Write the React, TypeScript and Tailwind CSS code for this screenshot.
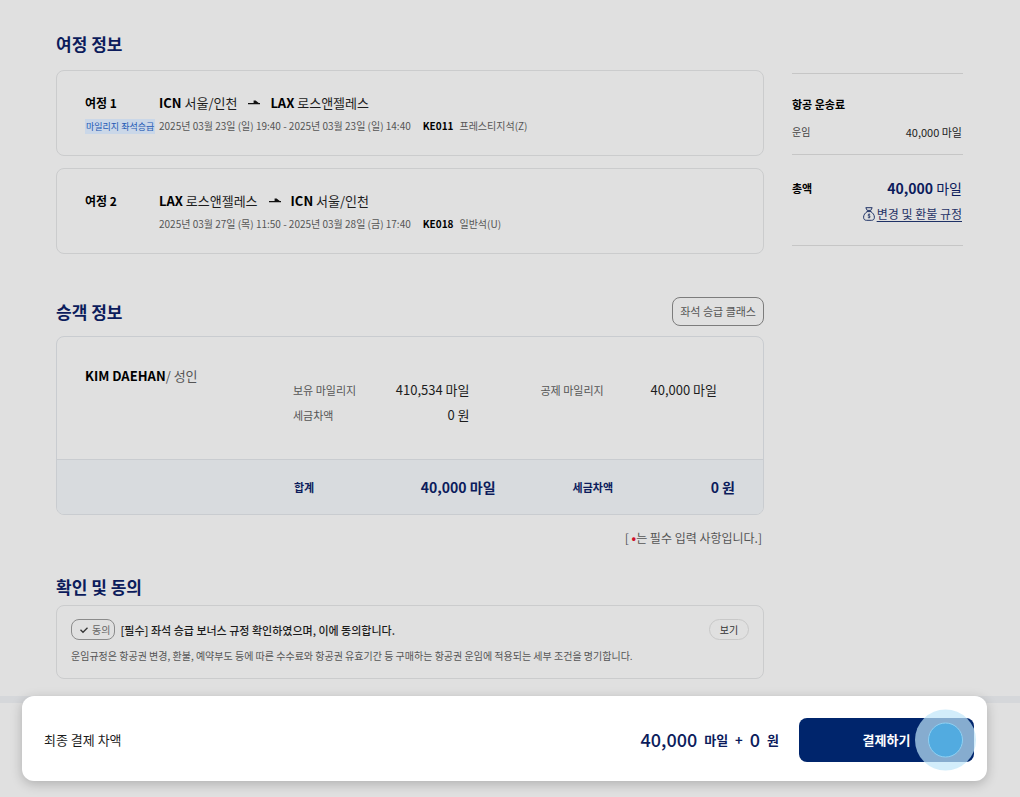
import { useState } from 'react'
import type { ReactNode } from 'react'

type Journey = {
  id: number
  badge?: string
  from: { code: string; city: string }
  to: { code: string; city: string }
  schedule: string
  flight: string
  cabin: string
}

const journeys: Journey[] = [
  {
    id: 1,
    badge: '마일리지 좌석승급',
    from: { code: 'ICN', city: '서울/인천' },
    to: { code: 'LAX', city: '로스앤젤레스' },
    schedule: '2025년 03월 23일 (일) 19:40 - 2025년 03월 23일 (일) 14:40',
    flight: 'KE011',
    cabin: '프레스티지석(Z)',
  },
  {
    id: 2,
    from: { code: 'LAX', city: '로스앤젤레스' },
    to: { code: 'ICN', city: '서울/인천' },
    schedule: '2025년 03월 27일 (목) 11:50 - 2025년 03월 28일 (금) 17:40',
    flight: 'KE018',
    cabin: '일반석(U)',
  },
]

export default function App() {
  return (
    <div className="min-h-screen bg-[#e0e0e0] text-[#1c1c1c] font-['Noto_Sans_CJK_KR',sans-serif]">
      <div className="flex items-start gap-7 pt-8 pl-14 pr-[57px]">
        <main className="flex-1 min-w-0">
          <section>
            <SectionTitle>여정 정보</SectionTitle>
            <div className="mt-3.5 flex flex-col gap-3">
              {journeys.map(j => (
                <JourneyCard key={j.id} journey={j} />
              ))}
            </div>
          </section>

          <section className="mt-[43px]">
            <div className="flex items-center justify-between">
              <SectionTitle>승객 정보</SectionTitle>
              <button type="button" className="h-[29px] px-[7px] rounded-lg border border-[#7c7c7c] text-[11px] text-[#555]">
                좌석 승급 클래스
              </button>
            </div>
            <PassengerCard />
            <p className="mt-[13px] pr-0.5 text-right text-[12px] leading-5 text-[#555]">
              [ <span className="font-bold text-[#d0112b]">•</span>는 필수 입력 사항입니다.]
            </p>
          </section>

          <section className="mt-[27px]">
            <SectionTitle>확인 및 동의</SectionTitle>
            <Agreement />
          </section>
        </main>

        <FareSummary />
      </div>

      <PaymentBar />
    </div>
  )
}

function SectionTitle({ children }: { children: ReactNode }) {
  return <h2 className="text-[17px] leading-6 font-bold text-[#0c1c5c]">{children}</h2>
}

function JourneyCard({ journey }: { journey: Journey }) {
  return (
    <article className="flex min-h-[86px] rounded-lg border border-[#cbcccd] px-7 pt-[22px] pb-4">
      <div className="w-[74px] shrink-0">
        <h3 className="text-[12px] leading-5 font-bold text-black">여정 {journey.id}</h3>
        {journey.badge && (
          <span className="mt-1.5 inline-block whitespace-nowrap bg-[#cad7e8] px-px text-[9px] leading-[15px] text-[#2359b5] align-top">
            {journey.badge}
          </span>
        )}
      </div>
      <div>
        <p className="flex items-center text-[13px] leading-5">
          <Place {...journey.from} />
          <RouteArrow />
          <Place {...journey.to} />
        </p>
        <p className="mt-[3px] text-[10px] leading-5 text-[#555]">
          {journey.schedule}
          <strong className="ml-3 mr-1.5 font-bold text-black">{journey.flight}</strong>
          {journey.cabin}
        </p>
      </div>
    </article>
  )
}

function Place({ code, city }: { code: string; city: string }) {
  return (
    <span>
      <strong className="font-bold text-black">{code}</strong> {city}
    </span>
  )
}

function RouteArrow() {
  return (
    <svg className="ml-[11px] mr-2.5 h-3 w-3" viewBox="0 0 12 12" aria-hidden="true">
      <path d="M0 6h12v1.3H0zM5.6 3.5h2L12 7H5.6z" fill="#111" />
    </svg>
  )
}

function PassengerCard() {
  return (
    <div className="mt-2.5 overflow-hidden rounded-lg border border-[#c9ccd0]">
      <div className="flex h-[122px] pl-7 pr-[46px]">
        <p className="w-[208px] shrink-0 pt-[29px] text-[13px] leading-5 text-[#555]">
          <strong className="font-bold text-black">KIM DAEHAN</strong>/ 성인
        </p>
        <dl className="grid flex-1 grid-cols-2 content-start gap-x-[71px] gap-y-[5px] pt-[43px]">
          <Amount label="보유 마일리지" value="410,534 마일" />
          <Amount label="공제 마일리지" value="40,000 마일" />
          <Amount label="세금차액" value="0 원" />
        </dl>
      </div>
      <dl className="grid grid-cols-[201fr_162fr] gap-x-[77px] border-t border-[#c9ccd0] bg-[#d8dbde] pt-[17px] pb-[17px] pl-[237px] pr-7 text-[#0c1c5c]">
        <Total label="합계" value="40,000 마일" />
        <Total label="세금차액" value="0 원" />
      </dl>
    </div>
  )
}

function Amount({ label, value }: { label: string; value: string }) {
  return (
    <div className="flex items-center justify-between leading-5">
      <dt className="text-[11px] text-[#555]">{label}</dt>
      <dd className="text-[13px] text-[#1c1c1c]">{value}</dd>
    </div>
  )
}

function Total({ label, value }: { label: string; value: string }) {
  return (
    <div className="flex items-center justify-between leading-5">
      <dt className="text-[11px] font-bold">{label}</dt>
      <dd className="text-[14px] font-bold">{value}</dd>
    </div>
  )
}

function Agreement() {
  const [agreed, setAgreed] = useState(true)

  return (
    <div className="mt-1.5 rounded-lg border border-[#cbcccd] px-3.5 pt-[13px] pb-3">
      <div className="flex items-center">
        <label className="flex h-[21px] items-center gap-1 rounded-lg border border-[#8b8b8b] pl-2 pr-1 text-[10px] text-[#666]">
          <input
            type="checkbox"
            className="sr-only"
            checked={agreed}
            onChange={e => setAgreed(e.target.checked)}
          />
          <svg className="h-2 w-2" viewBox="0 0 8 8" fill="none" stroke="#333" strokeWidth="1.3" aria-hidden="true">
            <path d="M.5 3.8 3 6.3 7.5 1.8" />
          </svg>
          동의
        </label>
        <p className="ml-[5px] flex-1 text-[11px] font-medium leading-5 text-[#1c1c1c]">
          [필수] 좌석 승급 보너스 규정 확인하였으며, 이에 동의합니다.
        </p>
        <button type="button" className="h-[21px] w-10 rounded-full border border-[#c8c8c8] text-[10px] text-[#333]">
          보기
        </button>
      </div>
      <p className="mt-1.5 text-[10px] leading-5 text-[#555]">
        운임규정은 항공권 변경, 환불, 예약부도 등에 따른 수수료와 항공권 유효기간 등 구매하는 항공권 운임에 적용되는 세부 조건을 명기합니다.
      </p>
    </div>
  )
}

function FareSummary() {
  return (
    <aside className="mt-[41px] w-[171px] shrink-0 border-y border-[#c6c6c6]">
      <div className="border-b border-[#c6c6c6] pt-5 pb-3">
        <h3 className="text-[11px] leading-5 font-bold text-black">항공 운송료</h3>
        <p className="mt-2 flex items-center justify-between pr-px leading-5">
          <span className="text-[10px] text-[#444]">운임</span>
          <span className="text-[11px] text-[#222]">40,000 마일</span>
        </p>
      </div>
      <div className="pt-[23px] pb-[21px] pr-px">
        <p className="flex items-center justify-between leading-5">
          <span className="text-[11px] font-bold text-black">총액</span>
          <span className="text-[14px] text-[#0c1c5c]">
            <strong className="font-bold">40,000</strong> 마일
          </span>
        </p>
        <a href="#rules" className="mt-1.5 flex items-center justify-end gap-0.5 text-[12px] leading-5 text-[#1f3266]">
          <MoneyBag />
          <span className="underline underline-offset-2">변경 및 환불 규정</span>
        </a>
      </div>
    </aside>
  )
}

function MoneyBag() {
  return (
    <svg className="h-[14px] w-3" viewBox="0 0 12 14" fill="none" stroke="#1f3266" aria-hidden="true">
      <path d="M2.8.7h6.4L7.8 3.4H4.2zM3.8 4.6h4.4" />
      <path d="M4.2 4.6C2 6 .6 8 .6 10.2c0 2 1 3.1 2.8 3.1h5.2c1.8 0 2.8-1.1 2.8-3.1C11.4 8 10 6 7.8 4.6" />
      <path d="M7.2 7.7C6.5 7 5 7.2 5 8.1c0 1.1 2.2.7 2.2 1.8 0 .9-1.6 1.1-2.4.4M6.1 6.6v4.6" strokeWidth=".8" />
    </svg>
  )
}

function PaymentBar() {
  return (
    <footer className="mt-[17px] border-t-[7px] border-[#d5d7da] pb-4">
      <div className="relative -mt-[7px] ml-[22px] mr-[33px] flex h-[85px] items-center rounded-xl bg-white pt-0.5 pl-[22px] pr-[13px] shadow-[0_3px_12px_rgba(0,0,0,0.22)]">
        <p className="flex-1 text-[13px] leading-5">최종 결제 차액</p>
        <p className="flex items-center gap-[7px] text-[13px] font-bold text-[#0c1c5c]">
          <strong className="text-[18px] font-medium">40,000</strong>
          <span>마일</span>
          <span>+</span>
          <strong className="text-[18px] font-medium">0</strong>
          <span>원</span>
        </p>
        <button type="button" className="relative ml-5 h-11 w-[175px] rounded-lg bg-[#00256c] text-[13px] font-bold text-white">
          결제하기
          {/* tap indicator */}
          <span className="absolute -right-0.5 top-1/2 flex size-[61px] -translate-y-1/2 items-center justify-center rounded-full bg-[#bfe6fa]/70">
            <span className="size-[35px] rounded-full border border-[#8fd0f2] bg-[#52abe0]" />
          </span>
        </button>
      </div>
    </footer>
  )
}
